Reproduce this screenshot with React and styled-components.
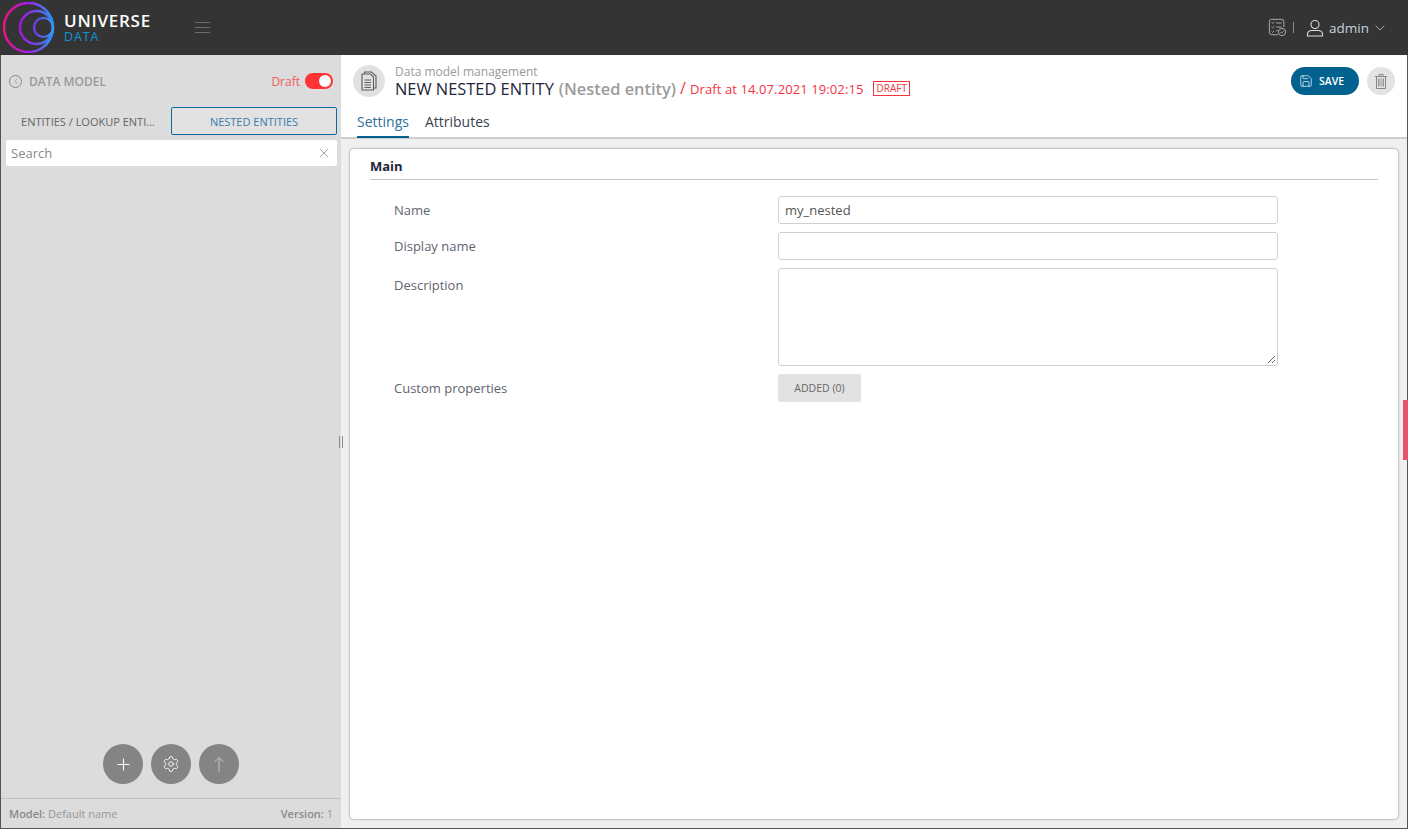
import React from 'react';
import styled, { createGlobalStyle } from 'styled-components';
import { ChevronDown, Plus, Settings, Save, X, ChevronLeft } from 'lucide-react';

const GlobalStyle = createGlobalStyle`
  html, body {
    margin: 0;
    height: 100%;
    overflow: hidden;
  }
  body {
    font-family: "Open Sans", "Liberation Sans", sans-serif;
    font-size: 13px;
  }
  * {
    box-sizing: border-box;
  }
`;

const Page = styled.div`
  position: relative;
  display: flex;
  flex-direction: column;
  width: 1408px;
  height: 829px;
  border: solid #555;
  border-width: 0 1px 1px 1px;
`;
const Header = styled.header`
  display: flex;
  align-items: center;
  height: 55px;
  margin: 0 -1px;
  padding: 0 20px 0 3px;
  background: #343434;
  flex-shrink: 0;
`;
const LogoText = styled.div`
  display: flex;
  flex-direction: column;
  margin-left: 9px;
  padding-top: 1px;
  width: 130px;
`;
const LogoName = styled.span`
  color: #fff;
  font-size: 17px;
  font-weight: 600;
  letter-spacing: 0.75px;
  line-height: 18px;
`;
const LogoSub = styled.span`
  color: #0f96d2;
  font-size: 12.5px;
  font-weight: 400;
  letter-spacing: 0.9px;
  line-height: 14px;
`;
const Burger = styled.div`
  display: flex;
  flex-direction: column;
  gap: 4px;
  width: 15px;
  margin-left: 1px;
  span {
    display: block;
    height: 1px;
    background: #6d6d6d;
  }
`;
const HeaderRight = styled.div`
  display: flex;
  align-items: center;
  margin-left: auto;
  color: #c4d3de;
`;
const Divider = styled.span`
  width: 1px;
  height: 11px;
  margin: 0 12px 0 6px;
  background: #8a8a8a;
`;
const UserName = styled.span`
  margin: 0 3px 0 5px;
  font-size: 13.5px;
  color: #c4d3de;
`;
const Body = styled.div`
  display: flex;
  flex: 1;
  min-height: 0;
`;
const Sidebar = styled.aside`
  position: relative;
  display: flex;
  flex-direction: column;
  width: 340px;
  flex-shrink: 0;
  background: #dcdcdc;
`;
const SideHead = styled.div`
  display: flex;
  align-items: center;
  height: 52px;
  padding: 0 8px 0 8px;
`;
const BackIcon = styled.span`
  display: flex;
  align-items: center;
  justify-content: center;
  width: 13px;
  height: 13px;
  border: 1px solid #888;
  border-radius: 50%;
  color: #777;
`;
const SideTitle = styled.span`
  margin-left: 7px;
  color: #9a9a9a;
  font-size: 12px;
  font-weight: 600;
`;
const DraftLabel = styled.span`
  margin-left: auto;
  color: #f25a5a;
  font-size: 12px;
`;
const Toggle = styled.span`
  position: relative;
  width: 28px;
  height: 16px;
  margin-left: 5px;
  border-radius: 8px;
  background: #ff3333;
  &::after {
    content: '';
    position: absolute;
    top: 2px;
    right: 2px;
    width: 12px;
    height: 12px;
    border-radius: 50%;
    background: #fff;
  }
`;
const Tabs = styled.div`
  display: flex;
  align-items: center;
  height: 28px;
  padding: 0 3px 0 4px;
`;
const SideTab = styled.div`
  display: flex;
  align-items: center;
  justify-content: center;
  width: 166px;
  height: 28px;
  border: 1px solid ${props => (props.$active ? '#0f6a9c' : 'transparent')};
  border-radius: 2px;
  background: ${props => (props.$active ? '#e2e2e2' : 'transparent')};
  color: ${props => (props.$active ? '#3a7cab' : '#666')};
  font-size: 11px;
  white-space: nowrap;
`;
const SearchBox = styled.div`
  display: flex;
  align-items: center;
  justify-content: space-between;
  height: 26px;
  margin: 5px 4px 0 5px;
  padding: 0 5px;
  border-radius: 2px;
  background: #fff;
  color: #8a8a8a;
  font-size: 13px;
`;
const SideActions = styled.div`
  display: flex;
  justify-content: center;
  gap: 8px;
  margin-top: auto;
  padding-bottom: 14px;
`;
const RoundButton = styled.div`
  display: flex;
  align-items: center;
  justify-content: center;
  width: 40px;
  height: 40px;
  border-radius: 50%;
  background: #848484;
  color: ${props => (props.$dim ? '#c4c4c4' : '#fff')};
`;
const SideFooter = styled.div`
  display: flex;
  align-items: center;
  justify-content: space-between;
  height: 30px;
  padding: 0 8px;
  border-top: 1px solid #c0c0c0;
  color: #979797;
  font-size: 11px;
  b {
    font-weight: 600;
    color: #8a8a8a;
  }
`;
const Grip = styled.span`
  position: absolute;
  top: 381px;
  right: -2px;
  width: 4px;
  height: 12px;
  border: solid #888;
  border-width: 0 1px;
`;
const Main = styled.main`
  display: flex;
  flex-direction: column;
  flex: 1;
  min-width: 0;
  background: #f0f0f0;
`;
const MainHead = styled.div`
  flex-shrink: 0;
  height: 84px;
  padding: 0 12px 0 12px;
  background: #fff;
  border-bottom: 2px solid #cfcfcf;
`;
const TitleRow = styled.div`
  display: flex;
  align-items: flex-start;
  height: 55px;
  padding-top: 10px;
`;
const DocIcon = styled.div`
  display: flex;
  align-items: center;
  justify-content: center;
  width: 32px;
  height: 32px;
  border-radius: 50%;
  background: #e1e1e1;
  color: #5c5c5c;
`;
const TitleBlock = styled.div`
  display: flex;
  flex-direction: column;
  margin-left: 10px;
`;
const Crumb = styled.span`
  color: #9a9a9a;
  font-size: 12px;
  line-height: 14px;
`;
const TitleLine = styled.div`
  display: flex;
  align-items: center;
  height: 19px;
  font-size: 16.4px;
  line-height: 19px;
  white-space: nowrap;
`;
const TitleName = styled.span`
  color: #24263a;
  font-weight: 500;
`;
const TitleKind = styled.span`
  margin-left: 5px;
  color: #9c9c9c;
  font-weight: 600;
`;
const TitleDraft = styled.span`
  margin-left: 4px;
  color: #f5333f;
  font-size: 13px;
  font-weight: 500;
  letter-spacing: 0.1px;
  b {
    font-size: 16px;
    font-weight: 400;
    margin-right: 4px;
  }
`;
const DraftBadge = styled.span`
  display: flex;
  align-items: center;
  height: 15px;
  margin-left: 10px;
  padding: 0 2px;
  border: 1px solid #f5333f;
  color: #f5333f;
  font-size: 10px;
`;
const HeadActions = styled.div`
  display: flex;
  align-items: center;
  gap: 8px;
  margin-left: auto;
  margin-top: 2px;
`;
const SaveButton = styled.div`
  display: flex;
  align-items: center;
  gap: 6px;
  width: 68px;
  height: 28px;
  padding-left: 8px;
  border-radius: 14px;
  background: #01628f;
  color: #fff;
  font-size: 10.5px;
  font-weight: 600;
`;
const TrashButton = styled.div`
  display: flex;
  align-items: center;
  justify-content: center;
  width: 28px;
  height: 28px;
  border-radius: 50%;
  background: #e3e3e3;
  color: #858585;
`;
const MainTabs = styled.div`
  display: flex;
  gap: 16px;
  padding-left: 4px;
`;
const MainTab = styled.div`
  height: 28px;
  padding-top: 2px;
  font-size: 14px;
  line-height: 20px;
  color: ${props => (props.$active ? '#2f6f99' : '#3c3f50')};
  border-bottom: 2px solid ${props => (props.$active ? '#01628f' : 'transparent')};
`;
const Content = styled.div`
  flex: 1;
  min-height: 0;
  padding: 9px 8px 8px 8px;
`;
const Card = styled.section`
  height: 100%;
  padding: 8px 20px 0 20px;
  border: 1px solid #c9c9c9;
  border-radius: 5px;
  background: #fff;
  box-shadow: 0 0 2px rgba(0, 0, 0, 0.15);
`;
const CardTitle = styled.h3`
  margin: 0;
  height: 23px;
  color: #24263a;
  font-size: 13px;
  font-weight: 700;
  line-height: 18px;
  border-bottom: 1px solid #c4c4c4;
`;
const Form = styled.div`
  display: grid;
  grid-template-columns: 384px 500px;
  row-gap: 8px;
  margin-top: 16px;
  padding-left: 24px;
`;
const Label = styled.label`
  padding-top: ${props => props.$offset || 0}px;
  color: #5f6570;
  font-size: 13px;
  line-height: 28px;
`;
const Field = styled.div`
  position: relative;
  height: ${props => props.$height || 28}px;
  padding: 0 6px;
  border: 1px solid #cfcfcf;
  border-radius: 3px;
  color: #555;
  font-size: 13px;
  line-height: 27px;
`;
const ResizeMark = styled.svg`
  position: absolute;
  right: 1px;
  bottom: 1px;
`;
const AddedButton = styled.div`
  display: flex;
  align-items: center;
  justify-content: center;
  width: 83px;
  height: 28px;
  border-radius: 2px;
  background: #e2e2e2;
  color: #666;
  font-size: 10.5px;
`;
const RedTab = styled.div`
  position: absolute;
  top: 400px;
  right: -1px;
  width: 5px;
  height: 60px;
  background: #e8546a;
`;

function Logo() {
  return (
    <svg width="52" height="52" viewBox="0 0 52 52" fill="none">
      <defs>
        <linearGradient id="ring" x1="0" y1="0" x2="1" y2="0">
          <stop offset="0" stopColor="#f0137f" />
          <stop offset="0.5" stopColor="#a01ee8" />
          <stop offset="1" stopColor="#1fa2f5" />
        </linearGradient>
        <linearGradient id="ringMid" gradientUnits="userSpaceOnUse" x1="18" y1="0" x2="50" y2="0">
          <stop offset="0" stopColor="#a516e0" />
          <stop offset="1" stopColor="#2f8df5" />
        </linearGradient>
        <linearGradient id="ringSmall" gradientUnits="userSpaceOnUse" x1="32" y1="0" x2="50" y2="0">
          <stop offset="0" stopColor="#6f3cf0" />
          <stop offset="1" stopColor="#2fa0f5" />
        </linearGradient>
      </defs>
      <circle cx="25.500" cy="25.500" r="24.500" stroke="url(#ring)" strokeWidth="2.400" />
      <circle cx="33.500" cy="25.500" r="16.500" stroke="url(#ringMid)" strokeWidth="2.400" />
      <circle cx="40.500" cy="25.500" r="9.500" stroke="url(#ringSmall)" strokeWidth="2.200" />
    </svg>
  );
}

function TasksIcon() {
  return (
    <svg width="19" height="19" viewBox="0 0 21 21" fill="none" stroke="#b5b5b5" strokeWidth="1">
      <path d="M11 18.500H4a2.500 2.500 0 0 1-2.500-2.500V4A2.500 2.500 0 0 1 4 1.500h11A2.500 2.500 0 0 1 17.500 4v6" />
      <path d="M4 5l1 1 2-2M4 10l1 1 2-2M4 15l1 1 2-2M9 5.500h6M9 10h6M9 14h2" />
      <circle cx="15.500" cy="15.500" r="4" />
      <path d="M13.800 15.500l1.200 1.200 2-2.200" />
    </svg>
  );
}

function UserIcon() {
  return (
    <svg width="18" height="18" viewBox="0 0 18 18" fill="none" stroke="#d6dde2" strokeWidth="1.100">
      <circle cx="9" cy="5.500" r="4" />
      <path d="M1.500 17v-1.500c0-2.500 2-4 4.500-4h6c2.500 0 4.500 1.500 4.500 4V17z" />
    </svg>
  );
}

function DocumentIcon() {
  return (
    <svg width="16" height="20" viewBox="0 0 16 20" fill="none" stroke="currentColor" strokeWidth="1.100">
      <path d="M3.500 3V1h7l4.500 4v12h-2.500" />
      <path d="M1 3h8.500l3 3v13H1z" />
      <path d="M3.500 9h6.500M3.500 11.500h6.500M3.500 14h6.500M3.500 16.500h6.500" />
    </svg>
  );
}

function UpArrowIcon() {
  return (
    <svg width="12" height="17" viewBox="0 0 12 17" fill="none" stroke="currentColor" strokeWidth="1">
      <path d="M6 16V1.500M1.500 6L6 1.500 10.500 6" />
    </svg>
  );
}

function TrashIcon() {
  return (
    <svg width="12" height="15" viewBox="0 0 12 15" fill="none" stroke="currentColor" strokeWidth="1">
      <path d="M0 2.500h12M4 2.500V.5h4v2M1.500 2.500v12h9v-12" />
      <path d="M3.500 4.500v8M5 4.500v8M7 4.500v8M8.500 4.500v8" strokeWidth="0.800" />
    </svg>
  );
}

export default function App() {
  return (
    <Page>
      <GlobalStyle />
      <Header>
        <Logo />
        <LogoText>
          <LogoName>UNIVERSE</LogoName>
          <LogoSub>DATA</LogoSub>
        </LogoText>
        <Burger>
          <span />
          <span />
          <span />
        </Burger>
        <HeaderRight>
          <TasksIcon />
          <Divider />
          <UserIcon />
          <UserName>admin</UserName>
          <ChevronDown size={16} strokeWidth={1.1} />
        </HeaderRight>
      </Header>
      <Body>
        <Sidebar>
          <SideHead>
            <BackIcon>
              <ChevronLeft size={10} strokeWidth={1.2} />
            </BackIcon>
            <SideTitle>DATA MODEL</SideTitle>
            <DraftLabel>Draft</DraftLabel>
            <Toggle />
          </SideHead>
          <Tabs>
            <SideTab>ENTITIES / LOOKUP ENTI...</SideTab>
            <SideTab $active>NESTED ENTITIES</SideTab>
          </Tabs>
          <SearchBox>
            Search
            <X size={16} strokeWidth={1} color="#777" />
          </SearchBox>
          <SideActions>
            <RoundButton>
              <Plus size={19} strokeWidth={1.4} />
            </RoundButton>
            <RoundButton>
              <Settings size={18} strokeWidth={1.2} />
            </RoundButton>
            <RoundButton $dim>
              <UpArrowIcon />
            </RoundButton>
          </SideActions>
          <SideFooter>
            <span>
              <b>Model:</b> Default name
            </span>
            <span>
              <b>Version:</b> 1
            </span>
          </SideFooter>
          <Grip />
        </Sidebar>
        <Main>
          <MainHead>
            <TitleRow>
              <DocIcon>
                <DocumentIcon />
              </DocIcon>
              <TitleBlock>
                <Crumb>Data model management</Crumb>
                <TitleLine>
                  <TitleName>NEW NESTED ENTITY</TitleName>
                  <TitleKind>(Nested entity)</TitleKind>
                  <TitleDraft>
                    <b>/</b>Draft at 14.07.2021 19:02:15
                  </TitleDraft>
                  <DraftBadge>DRAFT</DraftBadge>
                </TitleLine>
              </TitleBlock>
              <HeadActions>
                <SaveButton>
                  <Save size={14} strokeWidth={1.2} />
                  SAVE
                </SaveButton>
                <TrashButton>
                  <TrashIcon />
                </TrashButton>
              </HeadActions>
            </TitleRow>
            <MainTabs>
              <MainTab $active>Settings</MainTab>
              <MainTab>Attributes</MainTab>
            </MainTabs>
          </MainHead>
          <Content>
            <Card>
              <CardTitle>Main</CardTitle>
              <Form>
                <Label>Name</Label>
                <Field>my_nested</Field>
                <Label>Display name</Label>
                <Field />
                <Label $offset={3}>Description</Label>
                <Field $height={98}>
                  <ResizeMark width="10" height="10" viewBox="0 0 10 10" stroke="#666" strokeWidth="1">
                    <path d="M9 2L2 9M9 6L6 9" />
                  </ResizeMark>
                </Field>
                <Label>Custom properties</Label>
                <AddedButton>ADDED (0)</AddedButton>
              </Form>
            </Card>
          </Content>
        </Main>
      </Body>
      <RedTab />
    </Page>
  );
}
